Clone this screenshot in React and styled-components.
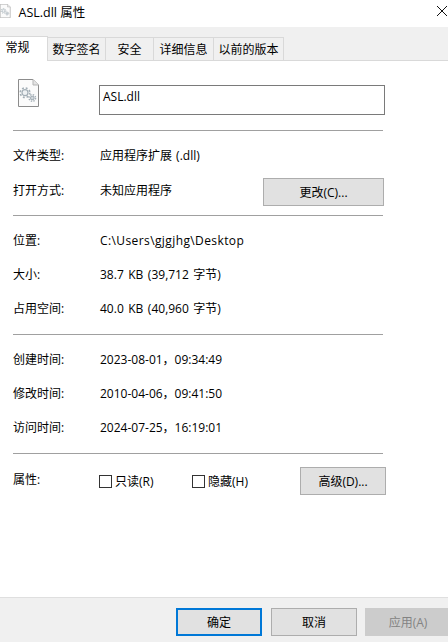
import styled, { createGlobalStyle } from "styled-components";

const GlobalStyle = createGlobalStyle`
  html, body {
    margin: 0;
    padding: 0;
    background: #fff;
  }
  * {
    box-sizing: border-box;
  }
`;

// Window
const Dialog = styled.div`
  width: 448px;
  height: 642px;
  display: flex;
  flex-direction: column;
  overflow: hidden;
  background: #fff;
  color: #000;
  font-family: "Open Sans", "Noto Sans CJK SC", sans-serif;
  font-size: 12px;
`;

const TitleBar = styled.div`
  height: 27px;
  flex: none;
  display: flex;
  align-items: center;
  padding: 0 1px 5px 0;
`;

const TitleText = styled.div`
  margin-left: 8px;
  font-size: 12.5px;
  flex: 1;
`;

// Tabs
const TabStrip = styled.div`
  height: 34px;
  flex: none;
  display: flex;
  align-items: flex-end;
  background: #f0f0f0;
  border-bottom: 1px solid #d9d9d9;
`;

const Tab = styled.div`
  width: ${(p) => p.$width}px;
  height: ${(p) => (p.$active ? 25 : 23)}px;
  margin-bottom: ${(p) => (p.$active ? -1 : 0)}px;
  display: flex;
  align-items: center;
  justify-content: center;
  background: ${(p) => (p.$active ? "#fff" : "#f0f0f0")};
  border: 1px solid #d9d9d9;
  border-left: 0;
  border-bottom: none;
  padding-bottom: ${(p) => (p.$active ? 5 : 0)}px;
  padding-right: ${(p) => (p.$active ? 12 : 0)}px;
  white-space: nowrap;
`;

// Body
const Content = styled.div`
  flex: 1;
  display: flex;
  flex-direction: column;
  padding: 0 64px 0 13px;
`;

const Header = styled.div`
  height: 69px;
  display: flex;
  align-items: flex-start;
  padding: 18px 0 0 5px;
`;

const NameInput = styled.div`
  width: 286px;
  height: 30px;
  margin: 6px -1px 0 60px;
  flex: none;
  border: 1px solid #7a7a7a;
  padding: 1px 3px 0;
  line-height: 19px;
`;

const Divider = styled.div`
  width: 370px;
  height: 1px;
  flex: none;
  background: #a0a0a0;
`;

const Section = styled.div`
  height: ${(p) => p.$height}px;
  flex: none;
  display: flex;
  flex-direction: column;
  padding: 7px 0 ${(p) => p.$bottom || 8.5}px;
`;

const Row = styled.div`
  flex: 1;
  display: flex;
  align-items: center;
`;

const Label = styled.div`
  width: 87px;
  flex: none;
`;

// Windows text runs a little wider than Open Sans in the latin parts
const Value = styled.div`
  flex: 1;
  white-space: nowrap;
  letter-spacing: ${(p) => p.$spacing || 0}px;
  word-spacing: ${(p) => p.$words || 0}px;
`;

const Button = styled.div`
  width: ${(p) => p.$width || 86}px;
  height: 28px;
  flex: none;
  display: flex;
  align-items: center;
  justify-content: center;
  background: ${(p) => (p.$disabled ? "#cccccc" : "#e1e1e1")};
  border: ${(p) => (p.$primary ? "2px solid #0078d7" : p.$disabled ? "1px solid #cccccc" : "1px solid #adadad")};
  color: ${(p) => (p.$disabled ? "#838383" : "#000")};
  margin-right: ${(p) => (p.$primary ? 1 : 0)}px;
`;

const ChangeButton = styled(Button)`
  margin-top: 4px;
`;

const AttrRow = styled.div`
  height: 42px;
  margin-top: 13px;
  display: flex;
  align-items: flex-start;
`;

const AttrLabel = styled(Label)`
  width: 86px;
  margin-top: 3px;
`;

const CheckField = styled.div`
  display: flex;
  align-items: center;
  width: ${(p) => p.$width}px;
  height: 28px;
  flex: none;
`;

const CheckBox = styled.span`
  width: 13px;
  height: 13px;
  flex: none;
  border: 1px solid #333;
  margin-right: 3px;
`;

const AttrButton = styled(Button)`
  margin-right: -2px;
`;

// Footer
const Footer = styled.div`
  height: 45px;
  flex: none;
  display: flex;
  gap: 8px;
  padding: 10px 0 0 176px;
  background: #f0f0f0;
  border-top: 1px solid #dfdfdf;
`;

function DllIcon({ size = 28 }) {
  const w = size * 0.75;
  return (
    <svg width={w} height={size} viewBox="0 0 21 28" style={{ flex: "none" }}>
      <path d="M.5.5H15L20.5 6V27.5H.5Z" fill="#fbfbfb" stroke="#8c8c8c" />
      <path d="M15 .5V6H20.5" fill="#e4e4e4" stroke="#b5b5b5" />
      <g fill="none" stroke="#a3aeb6">
        <circle cx="7" cy="13.7" r="3" fill="#eef1f3" strokeWidth="1.2" />
        <circle cx="7" cy="13.7" r="4.8" strokeWidth="1.6" strokeDasharray="1.9 1.9" />
        <circle cx="14.3" cy="19" r="1.8" fill="#d3d9dd" strokeWidth="1.1" />
        <circle cx="14.3" cy="19" r="3.3" strokeWidth="1.4" strokeDasharray="1.4 1.2" />
      </g>
    </svg>
  );
}

function CloseIcon() {
  return (
    <svg width="10" height="10" viewBox="0 0 10 10" style={{ flex: "none" }}>
      <path d="M0 0L10 10M10 0L0 10" stroke="#111" strokeWidth="1" />
    </svg>
  );
}

const tabs = [
  { name: "常规", width: 48, active: true },
  { name: "数字签名", width: 58 },
  { name: "安全", width: 48 },
  { name: "详细信息", width: 60 },
  { name: "以前的版本", width: 70 },
];

export default function App() {
  return (
    <Dialog>
      <GlobalStyle />
      <TitleBar>
        <DllIcon size={14} />
        <TitleText>ASL.dll 属性</TitleText>
        <CloseIcon />
      </TitleBar>

      <TabStrip>
        {tabs.map((t) => (
          <Tab key={t.name} $width={t.width} $active={t.active}>
            {t.name}
          </Tab>
        ))}
      </TabStrip>

      <Content>
        <Header>
          <DllIcon />
          <NameInput>ASL.dll</NameInput>
        </Header>
        <Divider />

        <Section $height={84} $bottom={8}>
          <Row>
            <Label>文件类型:</Label>
            <Value $words={1}>应用程序扩展 (.dll)</Value>
          </Row>
          <Row>
            <Label>打开方式:</Label>
            <Value>未知应用程序</Value>
            <ChangeButton $width={121}>更改(C)...</ChangeButton>
          </Row>
        </Section>
        <Divider />

        <Section $height={118}>
          <Row>
            <Label>位置:</Label>
            <Value $spacing={0.4}>C:\Users\gjgjhg\Desktop</Value>
          </Row>
          <Row>
            <Label>大小:</Label>
            <Value $words={1.4}>38.7 KB (39,712 字节)</Value>
          </Row>
          <Row>
            <Label>占用空间:</Label>
            <Value $words={1.4}>40.0 KB (40,960 字节)</Value>
          </Row>
        </Section>
        <Divider />

        <Section $height={118}>
          <Row>
            <Label>创建时间:</Label>
            <Value>2023-08-01，09:34:49</Value>
          </Row>
          <Row>
            <Label>修改时间:</Label>
            <Value>2010-04-06，09:41:50</Value>
          </Row>
          <Row>
            <Label>访问时间:</Label>
            <Value>2024-07-25，16:19:01</Value>
          </Row>
        </Section>
        <Divider />

        <AttrRow>
          <AttrLabel>属性:</AttrLabel>
          <CheckField $width={93}>
            <CheckBox />
            只读(R)
          </CheckField>
          <CheckField $width={108}>
            <CheckBox />
            隐藏(H)
          </CheckField>
          <AttrButton>高级(D)...</AttrButton>
        </AttrRow>
      </Content>

      <Footer>
        <Button $primary>确定</Button>
        <Button>取消</Button>
        <Button $disabled>应用(A)</Button>
      </Footer>
    </Dialog>
  );
}
